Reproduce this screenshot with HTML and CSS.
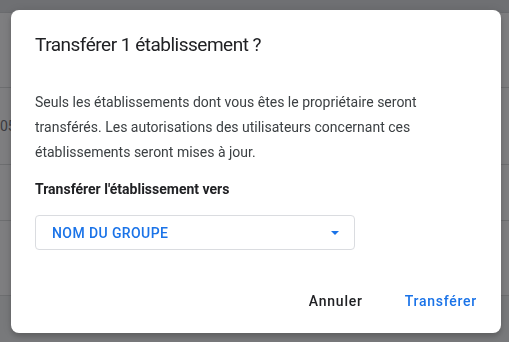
FILE: index.html
```html
<!DOCTYPE html>
<html lang="fr">
<head>
  <meta charset="UTF-8">
  <meta name="viewport" content="width=device-width, initial-scale=1.0">
  <title>Transférer l'établissement</title>
  <link rel="stylesheet" href="styles.css">
</head>
<body>

<div class="page">
  <div class="page-header"></div>
  <div class="row"></div>
  <div class="row row-tall"><span class="cell">05</span></div>
  <div class="row row-short"></div>
  <div class="row"></div>
</div>

<div class="scrim"></div>

<div class="dialog" role="dialog">
  <h1 class="dialog-title">Transférer 1 établissement ?</h1>
  <div class="dialog-body">
    <p class="dialog-text">Seuls les établissements dont vous êtes le propriétaire seront transférés. Les autorisations des utilisateurs concernant ces établissements seront mises à jour.</p>
    <div class="field-label">Transférer l'établissement vers</div>
    <div class="select">
      <span class="select-value">NOM DU GROUPE</span>
      <svg class="select-arrow" width="8" height="4" viewBox="0 0 8 4"><path d="M0 0h8L4 4z" fill="#1a73e8"/></svg>
    </div>
  </div>
  <div class="dialog-actions">
    <button class="btn btn-cancel">Annuler</button>
    <button class="btn btn-primary">Transférer</button>
  </div>
</div>

</body>
</html>
```

FILE: styles.css
```css
html, body {
  margin: 0;
  padding: 0;
  height: 100%;
}

body {
  font-family: Roboto, "Noto Sans", Arial, sans-serif;
  background-color: #fff;
  overflow: hidden;
}

.page {
  background-color: #f1f3f4;
  height: 100%;
}

.page-header {
  height: 12px;
  background-color: #dcdee0;
  border-bottom: 1px solid #d0d2d4;
}

.row {
  height: 74px;
  border-bottom: 1px solid #d6d8da;
  background-color: #fff;
}

.row-tall {
  height: 76px;
  display: flex;
  align-items: center;
}

.row-short {
  height: 55px;
}

.cell {
  font-size: 14px;
  color: #5f6368;
}

.scrim {
  position: fixed;
  inset: 0;
  background-color: rgba(32, 33, 36, 0.58);
}

.dialog {
  position: absolute;
  left: 11px;
  top: 10px;
  width: 490px;
  height: 323px;
  box-sizing: border-box;
  background-color: #fff;
  border-radius: 8px;
  box-shadow: 0 4px 5px rgba(0, 0, 0, 0.14), 0 1px 10px rgba(0, 0, 0, 0.12);
  display: flex;
  flex-direction: column;
}

.dialog-title {
  margin: 0;
  padding: 21px 24px 0;
  font-size: 19px;
  font-weight: 400;
  letter-spacing: -0.5px;
  line-height: 28px;
  color: #202124;
}

.dialog-body {
  padding: 31px 24px 0;
  flex: 1;
}

.dialog-text {
  margin: 0;
  font-size: 14px;
  line-height: 25px;
  color: #3c4043;
}

.field-label {
  margin-top: 14px;
  font-size: 14px;
  font-weight: 700;
  line-height: 20px;
  color: #202124;
}

.select {
  margin-top: 16px;
  width: 320px;
  height: 35px;
  box-sizing: border-box;
  border: 1px solid #dadce0;
  border-radius: 4px;
  display: flex;
  align-items: center;
  justify-content: space-between;
  padding: 0 15px 0 16px;
}

.select-value {
  font-size: 14px;
  font-weight: 500;
  letter-spacing: 0.4px;
  color: #1a73e8;
}

.select-arrow {
  display: block;
}

.dialog-actions {
  display: flex;
  justify-content: flex-end;
  gap: 26px;
  padding: 0 16px 14px;
}

.btn {
  font-family: inherit;
  font-size: 14px;
  font-weight: 500;
  letter-spacing: 0.75px;
  height: 36px;
  padding: 0 8px;
  border: none;
  border-radius: 4px;
  background: none;
  cursor: pointer;
}

.btn-cancel {
  color: #202124;
}

.btn-primary {
  color: #1a73e8;
}
```
